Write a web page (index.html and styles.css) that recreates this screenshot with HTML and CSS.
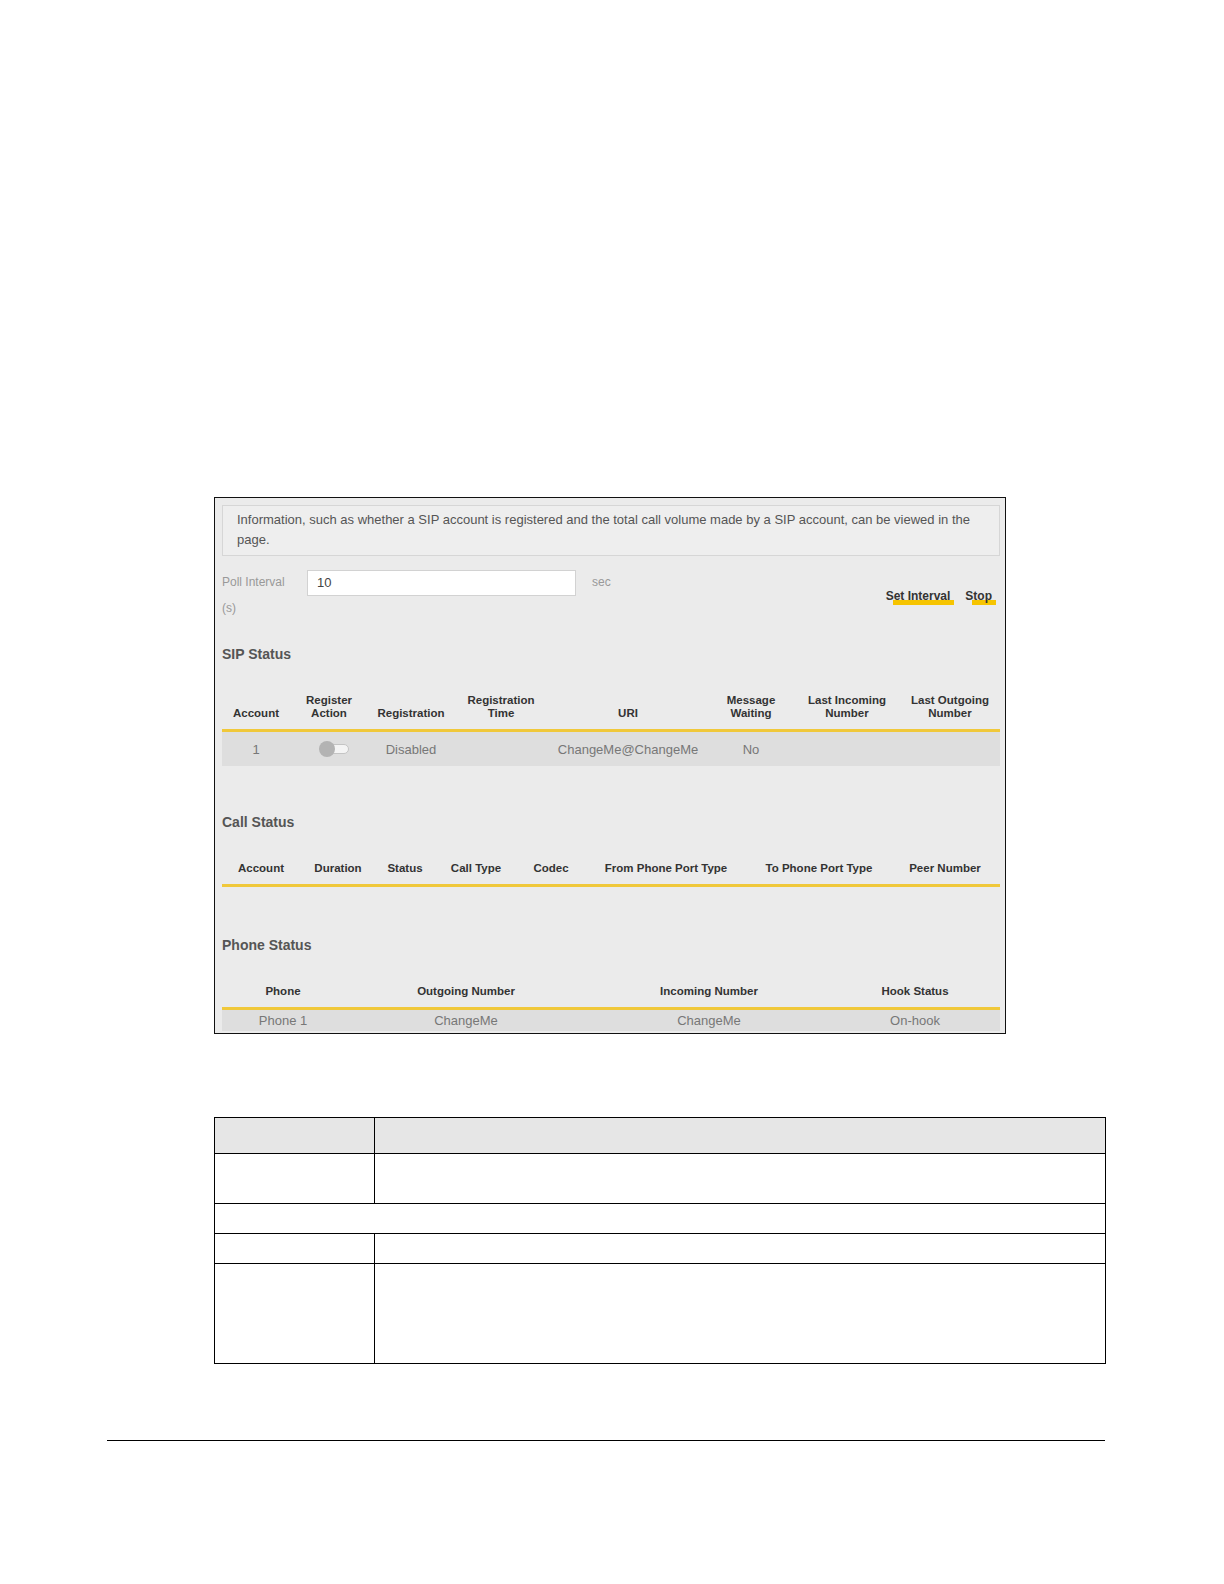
FILE: index.html
```html
<!DOCTYPE html>
<html lang="en">
<head>
<meta charset="utf-8">
<title>Voice Status</title>
<link rel="stylesheet" href="styles.css">
</head>
<body>
<div class="page">
  <div class="shot">
    <div class="info">Information, such as whether a SIP account is registered and the total call volume made by a SIP account, can be viewed in the<br>page.</div>

    <div class="poll">
      <div class="poll-label"><div>Poll Interval</div><div>(s)</div></div>
      <div class="poll-input">10</div>
      <div class="poll-unit">sec</div>
      <div class="actions">
        <span class="btn">Set Interval</span>
        <span class="btn btn-stop">Stop</span>
      </div>
    </div>

    <h2 class="sec-title">SIP Status</h2>
    <table class="grid sip">
      <colgroup>
        <col style="width:68px"><col style="width:78px"><col style="width:86px"><col style="width:94px">
        <col style="width:160px"><col style="width:86px"><col style="width:106px"><col style="width:100px">
      </colgroup>
      <thead>
        <tr>
          <th>Account</th><th>Register<br>Action</th><th>Registration</th><th>Registration<br>Time</th>
          <th>URI</th><th>Message<br>Waiting</th><th>Last Incoming<br>Number</th><th>Last Outgoing<br>Number</th>
        </tr>
      </thead>
      <tbody>
        <tr class="row-tall">
          <td>1</td>
          <td><svg class="toggle" width="32" height="18" viewBox="0 0 32 18"><rect x="3.5" y="4.5" width="27" height="9" rx="4.5" fill="#f4f4f4" stroke="#c4c4c4"/><circle cx="9" cy="9" r="8" fill="#b3b3b3"/></svg></td>
          <td>Disabled</td><td></td><td>ChangeMe@ChangeMe</td><td>No</td><td></td><td></td>
        </tr>
      </tbody>
    </table>

    <h2 class="sec-title sec-call">Call Status</h2>
    <table class="grid call">
      <colgroup>
        <col style="width:78px"><col style="width:76px"><col style="width:58px"><col style="width:84px">
        <col style="width:66px"><col style="width:164px"><col style="width:142px"><col style="width:110px">
      </colgroup>
      <thead>
        <tr>
          <th>Account</th><th>Duration</th><th>Status</th><th>Call Type</th><th>Codec</th>
          <th>From Phone Port Type</th><th>To Phone Port Type</th><th>Peer Number</th>
        </tr>
      </thead>
    </table>

    <h2 class="sec-title sec-phone">Phone Status</h2>
    <table class="grid phone">
      <colgroup>
        <col style="width:122px"><col style="width:244px"><col style="width:242px"><col style="width:170px">
      </colgroup>
      <thead>
        <tr><th>Phone</th><th>Outgoing Number</th><th>Incoming Number</th><th>Hook Status</th></tr>
      </thead>
      <tbody>
        <tr class="row-short"><td>Phone 1</td><td>ChangeMe</td><td>ChangeMe</td><td>On-hook</td></tr>
      </tbody>
    </table>
  </div>

  <table class="desc">
    <colgroup><col class="desc-c1"><col></colgroup>
    <tr class="desc-head"><td></td><td></td></tr>
    <tr class="h50"><td></td><td></td></tr>
    <tr class="h30"><td colspan="2"></td></tr>
    <tr class="h30"><td></td><td></td></tr>
    <tr class="h100"><td></td><td></td></tr>
  </table>

  <div class="foot"></div>
</div>
</body>
</html>
```

FILE: styles.css
```css
html, body {
  margin: 0;
  padding: 0;
  background: #ffffff;
}

.page {
  padding-top: 497px;
  padding-bottom: 20px;
  font-family: "Liberation Sans", Arial, sans-serif;
}

.shot {
  margin-left: 214px;
  width: 778px;
  border: 1px solid #111;
  background: #ebebeb;
  padding: 7px 5px 2px 7px;
}

.info {
  border: 1px solid #d6d6d6;
  background: #eeeeee;
  padding: 4px 10px 5px 14px;
  font-size: 13px;
  line-height: 20px;
  color: #555;
  white-space: nowrap;
}

.poll {
  display: flex;
  align-items: flex-start;
  margin-top: 13px;
  font-size: 12px;
  color: #999;
}

.poll-label {
  width: 85px;
  line-height: 26px;
}

.poll-input {
  margin-top: 1px;
  width: 258px;
  height: 24px;
  line-height: 24px;
  padding-left: 9px;
  background: #fff;
  border: 1px solid #d2d2d2;
  color: #444;
  font-size: 13px;
}

.poll-unit {
  margin-left: 16px;
  line-height: 26px;
}

.actions {
  margin-left: auto;
  margin-right: 8px;
  padding-top: 18px;
  display: flex;
  gap: 15px;
  line-height: 18px;
}

.btn {
  position: relative;
  z-index: 0;
  font-weight: bold;
  color: #333;
  font-size: 12px;
}

.btn::after {
  content: "";
  position: absolute;
  left: 7px;
  right: -4px;
  top: 13px;
  height: 5px;
  background: #f6c400;
  z-index: -1;
}

.sec-title {
  margin: 23px 0 0 0;
  font-size: 14px;
  line-height: 20px;
  font-weight: bold;
  color: #555;
}

.sec-call { margin-top: 46px; }
.sec-phone { margin-top: 48px; }

.grid {
  margin-top: 30px;
  width: 778px;
  border-collapse: collapse;
  table-layout: fixed;
}

.grid th {
  padding: 0 2px 9px;
  font-size: 11.5px;
  line-height: 13px;
  font-weight: bold;
  color: #333;
  vertical-align: bottom;
  text-align: center;
  border-bottom: 3px solid #f0c83a;
}

.grid td {
  padding: 0 2px;
  text-align: center;
  font-size: 13px;
  color: #777;
  background: #dedede;
  white-space: nowrap;
}

.row-tall td { height: 34px; }
.row-short td { height: 21px; }

.toggle { display: block; margin: 0 auto 0 26px; }

.desc {
  margin-top: 83px;
  margin-left: 214px;
  width: 892px;
  border-collapse: collapse;
  table-layout: fixed;
}

.desc td {
  border: 1px solid #000;
  padding: 0;
}

.desc-c1 { width: 160px; }

.desc-head td { height: 35px; background: #e6e6e6; }
.h50 td { height: 49px; }
.h30 td { height: 29px; }
.h100 td { height: 99px; }

.foot {
  margin-top: 76px;
  margin-left: 107px;
  width: 998px;
  height: 1px;
  background: #000;
}
```
